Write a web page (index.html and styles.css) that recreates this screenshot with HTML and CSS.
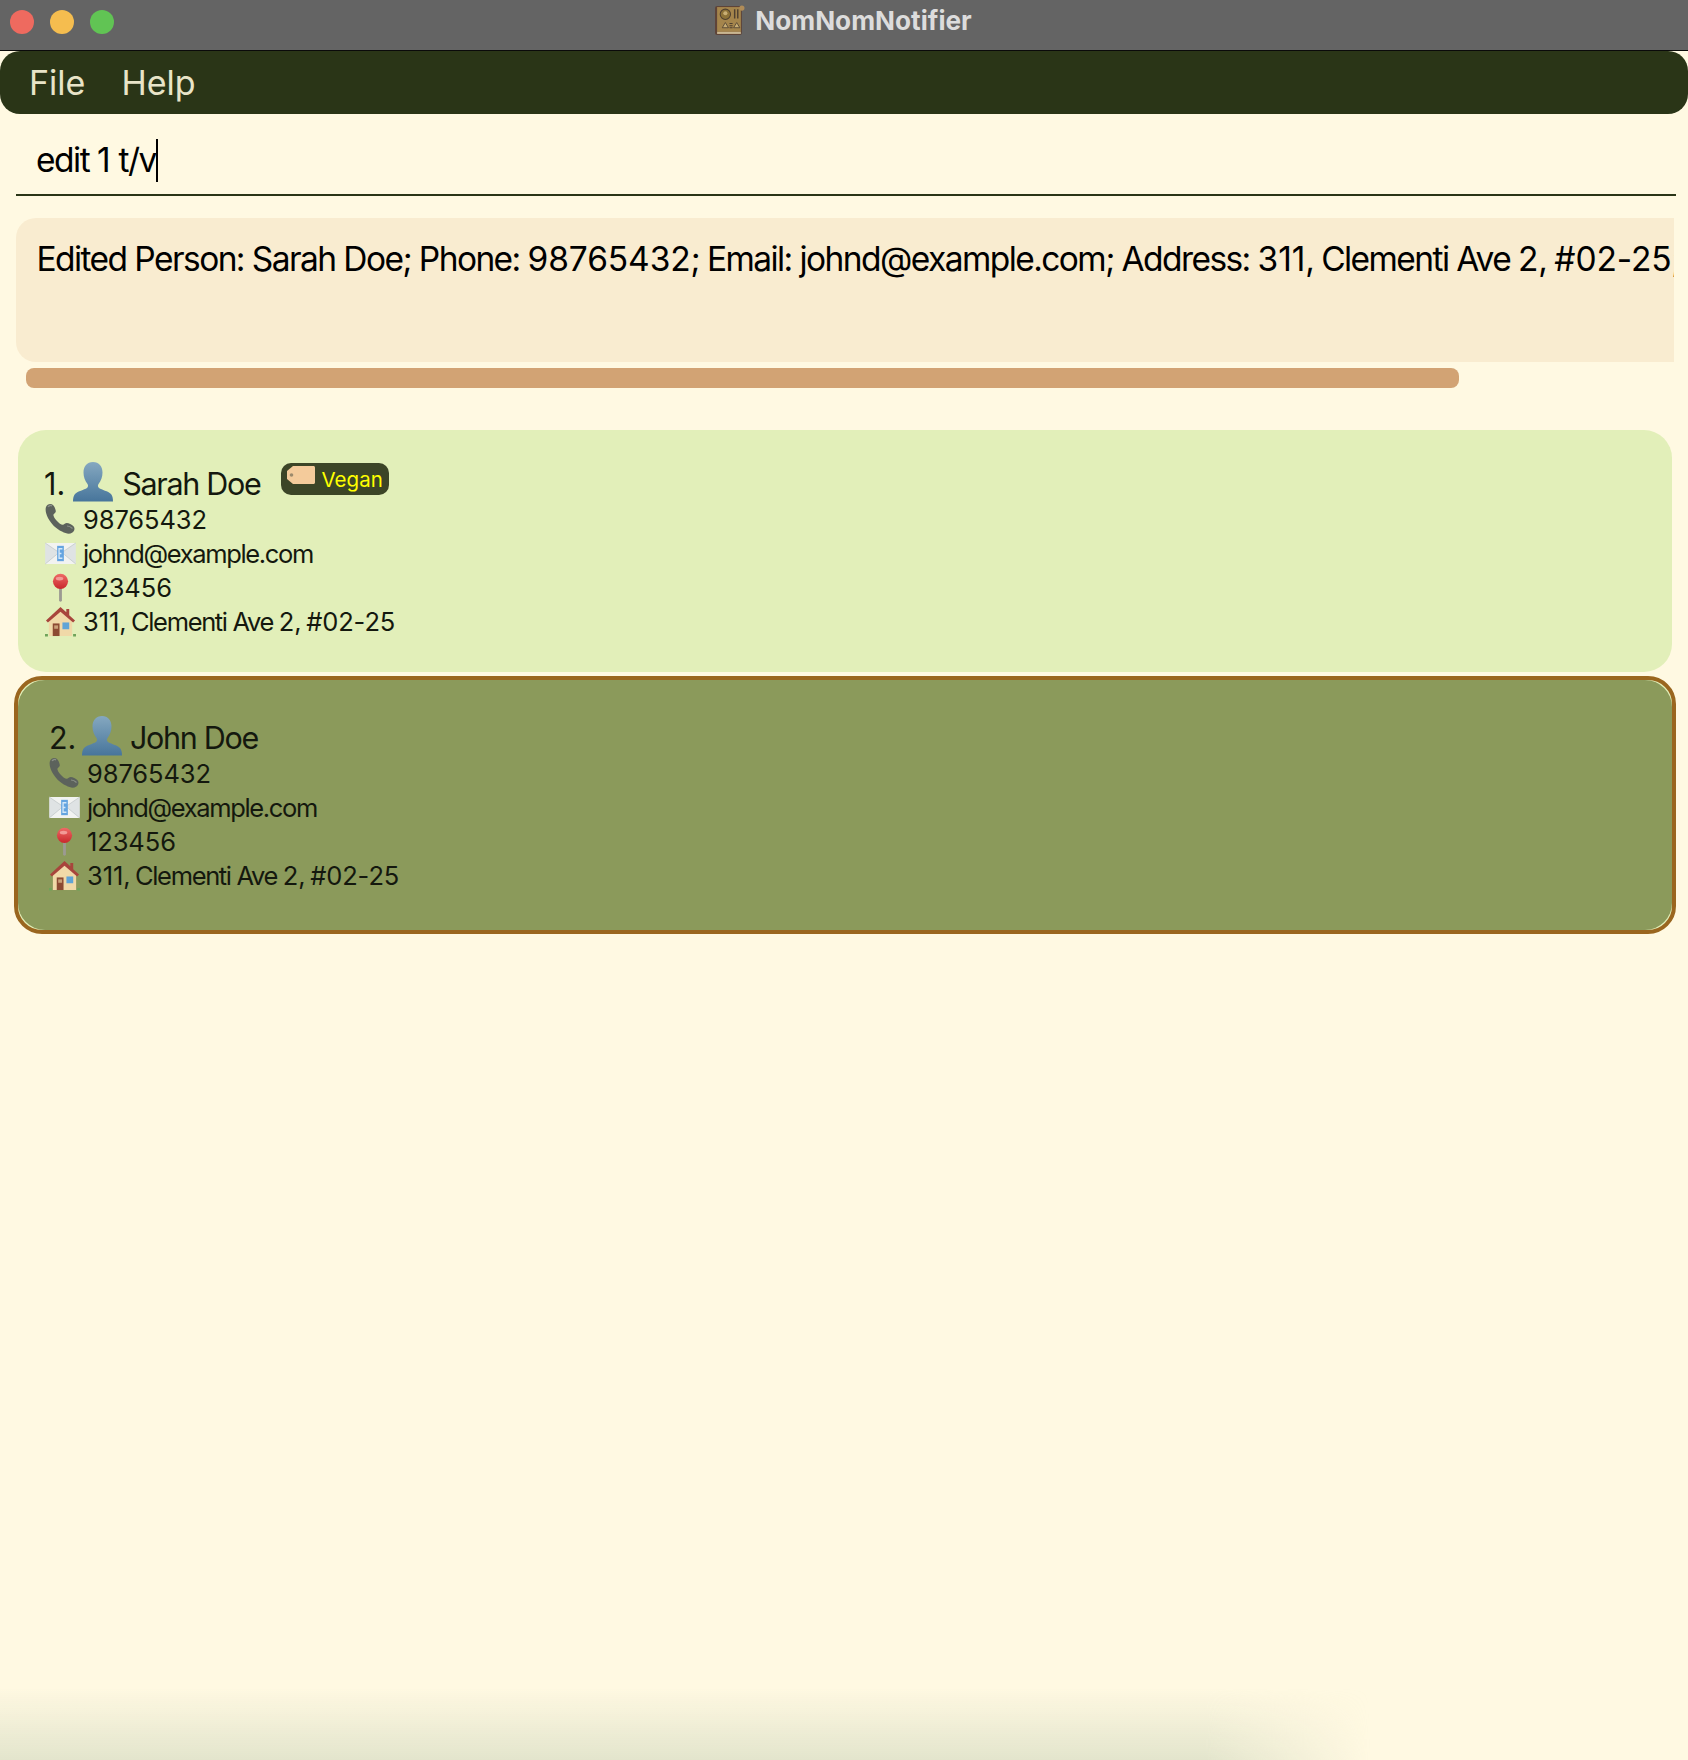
FILE: index.html
```html
<!DOCTYPE html>
<html lang="en">
<head>
    <meta charset="UTF-8">
    <meta name="viewport" content="width=device-width, initial-scale=1.0">
    <title>NomNomNotifier</title>
    <link rel="stylesheet" href="styles.css">
</head>
<body>
    <svg class="sprites" width="0" height="0" aria-hidden="true">
        <defs>
            <linearGradient id="bust" x1="0" y1="0" x2="0" y2="1">
                <stop offset="0" stop-color="#85a8c0"/>
                <stop offset="1" stop-color="#47759b"/>
            </linearGradient>
            <linearGradient id="pin" x1="0" y1="0" x2="0" y2="1">
                <stop offset="0" stop-color="#ee6a66"/>
                <stop offset="1" stop-color="#c9282c"/>
            </linearGradient>
        </defs>
        <symbol id="icon-person" viewBox="0 0 40 40">
            <path fill="url(#bust)" d="M20 0c6 0 9.500 4.500 9.500 10.500 0 4.500-1.500 8.500-4 11.500-.8 1-.8 3 .5 4 3 2 9 3 12 6 1.500 1.500 2 4.500 2 7.500H0c0-3 .5-6 2-7.500 3-3 9-4 12-6 1.300-1 1.300-3 .5-4-2.500-3-4-7-4-11.500C10.500 4.500 14 0 20 0z"/>
        </symbol>
        <symbol id="icon-phone" viewBox="0 0 32 32">
            <path fill="#5c625c" d="M2 4C3 1 7 0 9 2c1.500 1.500 2.500 4 2.800 6 .2 1.500-1.500 2.500-2.300 3.500-.5 1 .8 3.500 3 6 2.500 2.800 5 4.500 6.300 4.300 1.200-.3 2.500-1.800 4-1.800 2 0 5 1.500 6.700 3.300 1.800 2 1 5-1.500 6.500-2.500 1.500-6 1-10-1.300C12 26 7 20.500 4 15 2 11 1 7 2 4z"/>
            <path fill="none" stroke="#8a8f88" stroke-width="1.200" d="M4 4c1-1.500 3-2 4-1M23 23c2 0 4 1 5.500 2.500"/>
        </symbol>
        <symbol id="icon-mail" viewBox="0 0 32 24">
            <rect x="0" y="1" width="32" height="22" rx="1.500" fill="#dfe3e4"/>
            <path fill="#f2f3f1" d="M0 1l16 11L32 1zM0 23l12-10 4 2 4-2 12 10z"/>
            <path fill="none" stroke="#c2c8c9" stroke-width=".8" d="M0 1l16 11L32 1M0 23l12-10M32 23L20 13"/>
            <rect x="12.500" y="4" width="7" height="16" fill="#64a4e0"/>
            <path fill="none" stroke="#d5e8f8" stroke-width="1.400" d="M18 7h-3.500v10H18M14.500 12H17"/>
        </symbol>
        <symbol id="icon-pin" viewBox="0 0 18 30">
            <rect x="7.500" y="13" width="3" height="17" rx="1.500" fill="#9c9a92"/>
            <circle cx="9" cy="8.500" r="8" fill="url(#pin)"/>
            <ellipse cx="8" cy="5.500" rx="4" ry="2" fill="#f29a96"/>
        </symbol>
        <symbol id="icon-house" viewBox="0 0 32 32">
            <path fill="#6fa35a" d="M0 29h3v2.500H0zM29 29h3v2.500h-3z"/>
            <path fill="#f0d9a8" d="M4 14L16 5l12 9v17H4z"/>
            <path fill="#a8453c" d="M16 1L1 15l2 2L16 6l13 11 2-2-6-5.500V3h-3v3.500z"/>
            <rect x="8" y="18" width="7" height="13" fill="#8c4a32"/>
            <rect x="18" y="17" width="7" height="7" fill="#5fa4d6"/>
            <rect x="9.500" y="20" width="4" height="3.500" fill="#caa078"/>
        </symbol>
        <symbol id="icon-tag" viewBox="0 0 28 18">
            <path fill="#f4cb9b" d="M6 0h20.500c.8 0 1.500.7 1.500 1.500v15c0 .8-.7 1.500-1.500 1.500H6L0 13V5z"/>
            <circle cx="4.500" cy="9" r="1.800" fill="#9c8a6c"/>
        </symbol>
        <symbol id="icon-book" viewBox="0 0 30 30">
            <rect x="1" y="1" width="26" height="28" rx="2" fill="#5e4438"/>
            <rect x="3" y="2" width="23" height="24" fill="#a5854c"/>
            <circle cx="27" cy="3" r="2.500" fill="#b08c58"/>
            <circle cx="11" cy="9" r="5" fill="#8d7238" stroke="#4f4030" stroke-width="1"/>
            <circle cx="11" cy="8" r="2" fill="#c9ae74"/>
            <path fill="none" stroke="#4f4030" stroke-width="1.400" d="M20 4v9M23 4v9"/>
            <path fill="#c9ae74" stroke="#4f4030" stroke-width=".8" d="M8 22l3-5 3 5zM19 22l3-5 3 5z"/>
            <path stroke="#4f4030" stroke-width="1" d="M15 18h3M15 20h3M15 22h3"/>
            <rect x="3" y="26" width="23" height="2" fill="#c9b692"/>
        </symbol>
    </svg>

    <header class="titlebar">
        <div class="lights">
            <span class="light light-red"></span>
            <span class="light light-amber"></span>
            <span class="light light-green"></span>
        </div>
        <div class="window-title">
            <svg class="app-icon"><use href="#icon-book"/></svg>
            <span>NomNomNotifier</span>
        </div>
    </header>

    <nav class="menubar">
        <span class="menu-item">File</span>
        <span class="menu-item">Help</span>
    </nav>

    <div class="command-box"><span class="command-text">edit <span class="digits">1</span> t/v</span><span class="caret"></span></div>

    <div class="result-box">Edited Person: Sarah Doe; Phone: <span class="digits">98765432</span>; Email: johnd@example.com; Address: <span class="digits">311</span>, Clementi Ave <span class="digits">2</span>, <span class="digits">#02-25</span>;</div>
    <div class="result-scroll"></div>

    <main class="person-list">
        <article class="card">
            <div class="card-inner">
                <div class="card-head">
                    <span class="index">1.</span>
                    <svg class="icon-person"><use href="#icon-person"/></svg>
                    <span class="name">Sarah Doe</span>
                    <span class="tag">
                        <svg class="icon-tag"><use href="#icon-tag"/></svg>
                        Vegan
                    </span>
                </div>
                <div class="detail"><span class="slot"><svg class="icon-phone"><use href="#icon-phone"/></svg></span><span class="digits">98765432</span></div>
                <div class="detail"><span class="slot"><svg class="icon-mail"><use href="#icon-mail"/></svg></span>johnd@example.com</div>
                <div class="detail"><span class="slot"><svg class="icon-pin"><use href="#icon-pin"/></svg></span><span class="digits">123456</span></div>
                <div class="detail"><span class="slot"><svg class="icon-house"><use href="#icon-house"/></svg></span><span><span class="digits">311</span>, Clementi Ave <span class="digits">2</span>, <span class="digits">#02-25</span></span></div>
            </div>
        </article>

        <article class="card card-selected">
            <div class="card-inner">
                <div class="card-head">
                    <span class="index">2.</span>
                    <svg class="icon-person"><use href="#icon-person"/></svg>
                    <span class="name">John Doe</span>
                </div>
                <div class="detail"><span class="slot"><svg class="icon-phone"><use href="#icon-phone"/></svg></span><span class="digits">98765432</span></div>
                <div class="detail"><span class="slot"><svg class="icon-mail"><use href="#icon-mail"/></svg></span>johnd@example.com</div>
                <div class="detail"><span class="slot"><svg class="icon-pin"><use href="#icon-pin"/></svg></span><span class="digits">123456</span></div>
                <div class="detail"><span class="slot"><svg class="icon-house"><use href="#icon-house"/></svg></span><span><span class="digits">311</span>, Clementi Ave <span class="digits">2</span>, <span class="digits">#02-25</span></span></div>
            </div>
        </article>
    </main>

    <div class="bottom-shade"></div>
</body>
</html>
```

FILE: styles.css
```css
html, body {
    margin: 0;
    height: 100%;
}
body {
    position: relative;
    overflow: hidden;
    background-color: #fff9e2;
    color: #14180e;
    font-family: Inter, Roboto, sans-serif;
}
.sprites {
    position: absolute;
}
svg {
    display: block;
}
/* the letters run tight in this app, the figures do not */
.digits {
    letter-spacing: -0.1px;
}

/* window chrome */
.titlebar {
    position: relative;
    display: flex;
    align-items: center;
    justify-content: center;
    height: 50px;
    background-color: #646464;
    border-bottom: 1px solid #0a0a0a;
}
.lights {
    position: absolute;
    left: 10px;
    top: 10px;
    display: flex;
    gap: 16px;
}
.light {
    width: 24px;
    height: 24px;
    border-radius: 50%;
}
.light-red {
    background-color: #ee6a5f;
}
.light-amber {
    background-color: #f5bd4f;
}
.light-green {
    background-color: #61c454;
}
.window-title {
    display: flex;
    align-items: center;
    gap: 10px;
    margin: 0 2px 10px 0;
    color: #dcdcdc;
    font-size: 26.200px;
    font-weight: 700;
}
.app-icon {
    width: 31px;
    height: 31px;
}

.menubar {
    display: flex;
    align-items: center;
    gap: 36px;
    height: 63px;
    padding-left: 29px;
    background-color: #2a3517;
    border-radius: 20px;
    color: #e8e4c8;
    font-size: 34px;
}

.command-box {
    display: flex;
    align-items: center;
    height: 68px;
    margin: 0 12px 0 16px;
    padding: 12px 0 0 20px;
    border-bottom: 2px solid #2a3517;
    color: #000;
    font-size: 33.500px;
    letter-spacing: -1.500px;
}
.caret {
    width: 2px;
    height: 43px;
    background-color: #000;
}

.result-box {
    box-sizing: border-box;
    height: 144px;
    margin: 22px 14px 0 16px;
    padding: 21px 0 0 20.500px;
    overflow: hidden;
    white-space: nowrap;
    background-color: #f9ecd0;
    border-radius: 20px 0 0 20px;
    color: #000;
    font-size: 33.500px;
    letter-spacing: -1.570px;
}
.result-scroll {
    width: 1433px;
    height: 20px;
    margin: 6px 0 0 26px;
    background-color: #d2a374;
    border-radius: 8px;
}

/* person cards */
.person-list {
    display: flex;
    flex-direction: column;
    gap: 4px;
    margin-top: 42px;
}
.card {
    height: 242px;
    box-sizing: border-box;
    margin: 0 16px 0 18px;
    background-color: #e2efb9;
    border-radius: 28px;
}
.card-inner {
    box-sizing: border-box;
    height: 100%;
    padding: 31px 26px 0;
    border-radius: 27px;
}
.card-selected {
    height: 258px;
    margin: 0 12px 0 14px;
    border: 4px solid #9a661f;
}
/* fill is rounder than the border's inner curve, so the card colour shows at the corners */
.card-selected .card-inner {
    padding: 35px 31px 0;
    background-color: #8b9a5b;
}
.card-head {
    display: flex;
    align-items: flex-end;
    height: 41px;
    font-size: 30.500px;
    letter-spacing: -1.300px;
}
.index {
    letter-spacing: 0;
}
.icon-person {
    width: 40px;
    height: 40px;
    margin: 0 9px 0 8px;
}
.card-selected .icon-person {
    margin: 0 7.500px 0 6px;
}
.name {
    line-height: 37px;
}
.tag {
    display: flex;
    align-items: center;
    gap: 7px;
    height: 32px;
    margin: 0 0 7px 20px;
    padding: 0 6px;
    background-color: #3c4527;
    border-radius: 10px;
    color: #ffff00;
    font-size: 20.500px;
    letter-spacing: 0;
}
.icon-tag {
    width: 28px;
    height: 18px;
    margin-top: -8px;
}
.detail {
    display: flex;
    align-items: center;
    height: 34px;
    font-size: 25.500px;
    letter-spacing: -1.350px;
}
.slot {
    display: flex;
    justify-content: center;
    width: 32px;
    margin-right: 7px;
}
.card-selected .slot {
    margin-left: -1px;
}
.icon-phone {
    width: 32px;
    height: 32px;
}
.icon-mail {
    width: 31px;
    height: 23px;
}
.icon-pin {
    width: 17px;
    height: 29px;
}
.icon-house {
    width: 31px;
    height: 31px;
}
.icon-person, .icon-phone, .icon-mail, .icon-pin, .icon-house, .icon-tag, .app-icon {
    filter: blur(0.5px);
}

.bottom-shade {
    position: absolute;
    left: 0;
    bottom: 0;
    width: 1370px;
    height: 72px;
    background: linear-gradient(to bottom, rgba(215, 220, 195, 0), rgba(215, 220, 195, 0.7));
    -webkit-mask-image: linear-gradient(to right, #000 88%, transparent 100%);
    mask-image: linear-gradient(to right, #000 88%, transparent 100%);
}
```
